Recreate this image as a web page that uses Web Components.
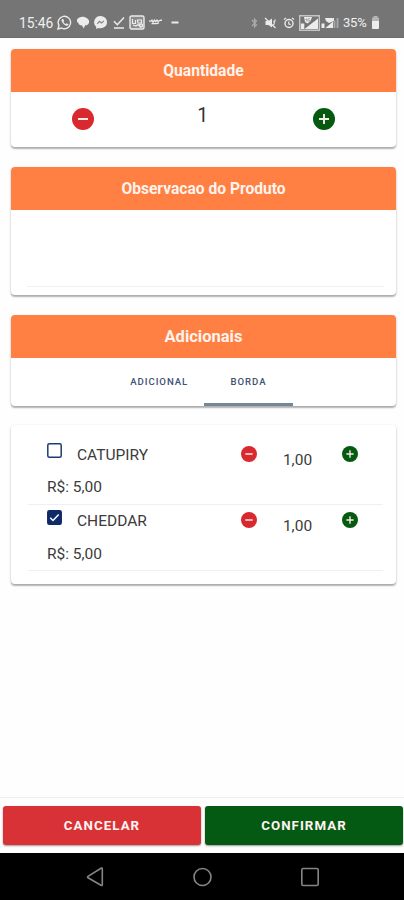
<!DOCTYPE html>
<html lang="pt-BR">
<head>
<meta charset="utf-8">
<title>Pedido</title>
<style>
html,body{margin:0;height:100%;background:#fefefe}
body{font-family:Roboto,"Liberation Sans",sans-serif;color:#333}
</style>
</head>
<body>
<order-screen></order-screen>
<script>
const define = (name, html, init) => customElements.define(name, class extends HTMLElement {
  constructor() {
    super();
    this.attachShadow({mode: 'open'});
  }
  connectedCallback() {
    const t = document.createElement('template');
    t.innerHTML = html;
    this.shadowRoot.replaceChildren(t.content.cloneNode(true));
    if (init) init(this, this.shadowRoot);
  }
});

define('status-bar', `
<style>
:host{display:flex;align-items:center;box-sizing:border-box;height:37.5px;padding:9px 24px 0 19px;background:#757575;color:#f0f0f0;font-size:13.8px;line-height:16px;border-bottom:1px solid #6b6b6b}
svg{display:block;flex:none;fill:none;stroke:#ececec;stroke-width:1.4}
.grow{flex:1}
.f{fill:#ececec;stroke:none}
.clock{width:38px}
.pct{width:28px;font-size:13px;letter-spacing:-.2px}
</style>
<span class="clock">15:46</span>
<svg width="15" height="15" viewBox="0 0 15 15"><path d="M1 14l.9-3.6A6.2 6.2 0 1 1 4.5 13z"/><path class="f" d="M5.2 4c-1 .8-.8 2 .2 3.6 1.200 1.900 3 3.300 4.600 3.200.9-.1 1.500-.7 1.500-1.500L9.700 8.200l-.8.9C7.800 8.700 6.900 7.800 6.400 6.700l.7-.8L6.300 4z"/></svg>
<svg style="margin-left:4px" width="14" height="15" viewBox="0 0 14 15"><path class="f" d="M3.500 2.500C6 1 9.500 2 11 3.200c2.400 1.300 2.800 4 1.200 6-.9 1-2.200 1.100-3.200 1.200L7.800 13.500l-1.800-3C4 10.500 2.600 9.500 2.300 7.800.4 7 .2 3.600 3.500 2.500z"/></svg>
<svg style="margin-left:3px" width="15" height="15" viewBox="0 0 15 15"><path class="f" d="M7.500 1a6.500 6.100 0 0 1 0 12.300c-.8 0-1.500-.1-2.100-.3L3.200 14v-2.200A6.200 6.200 0 0 1 7.500 1z"/><path d="M4.200 8.800l2.300-2.400 2 1.500 2.400-2" stroke="#858585" stroke-width="1.200"/></svg>
<svg style="margin-left:4px" width="14" height="15" viewBox="0 0 14 15"><path d="M2 6.200l3.300 3.500L12 2.500M2 13.100h10" stroke-width="1.500"/></svg>
<svg style="margin-left:3px" width="16" height="15" viewBox="0 0 16 15"><rect x="1" y="1" width="14" height="13" rx="1.500" fill="#8b8b8b"/><path d="M3.500 4v4.500h3V5m2 0h4v3H9zM4 10l3 1 2-1.500 3 2.500" stroke-width="1.200"/><circle cx="12" cy="10.500" r="1.500"/></svg>
<svg style="margin-left:3px" width="15" height="15" viewBox="0 0 15 15"><path d="M1 6.200h2l1-1 1 2 1.500-2 1 1.500L9 5l1 1.500 1.500-1L14 5M3.500 8.600h4.800L11 7.800" stroke-width="1.300"/></svg>
<svg style="margin-left:8px" width="8" height="15" viewBox="0 0 8 15"><path d="M.5 7.500h7" stroke-width="2"/></svg>
<span class="grow"></span>
<svg width="7" height="14" viewBox="0 0 7 14" opacity=".45"><path d="M1 4l4.500 5L3.500 11V3l2 2L1 10" stroke-width="1.200"/></svg>
<svg style="margin-left:6px" width="13" height="14" viewBox="0 0 13 14"><path class="f" d="M1.500 5h3L8 2.500v9L4.500 9h-3z"/><path d="M1 2l10.500 10M9.500 5c1 1 1 3 0 4M11 3.500v2" stroke-width="1.200"/></svg>
<svg style="margin-left:6px" width="12" height="14" viewBox="0 0 12 14"><circle cx="6" cy="7.500" r="4"/><path d="M1 3.500L3 2m6 0l2 1.500M5.800 5.500v2.300l1.800.9" stroke-width="1.200"/></svg>
<svg style="margin-left:4px" width="21" height="16" viewBox="0 0 21 16"><path d="M.7.700h19.600v14.600H.7z" stroke="#c4c4c4"/><path class="f" d="M19 3.500V14H5.500z"/><path class="f" d="M1.800 8.500h3.500V14H1.800zM5 2h8l-1.500 4-3 2.500L6 7z"/><path d="M7.500 3.500l-1 1.500h2.200M8 3.500v3m3-3H9.700v2.600H11V5" stroke="#999" stroke-width=".7"/></svg>
<svg style="margin-left:1px" width="18" height="16" viewBox="0 0 18 16"><path class="f" d="M12 6.500V13H4.500z"/><path class="f" d="M.5 8.500h3V13h-3zM4 3h9v3L8 8 5 6z"/><path d="M13.500 5.500V13m3-10v10" stroke="#aaa" stroke-width="1.800"/></svg>
<span class="pct" style="margin-left:4px">35%</span>
<svg width="9" height="15" viewBox="0 0 9 15"><path fill="#b5b5b5" stroke="none" d="M2.500 1h4v1.500H8V6H1V2.500h1.500z"/><path class="f" d="M1 6h7v7q0 1-1 1H2q-1 0-1-1z"/></svg>
`);

define('product-card', `
<style>
:host{display:block;border-radius:4px;background:#fff;box-shadow:0 2px 1.500px rgba(0,0,0,.24),0 1px 3px rgba(0,0,0,.16);overflow:hidden}
header{box-sizing:border-box;height:43px;padding-top:var(--title-drop,1px);line-height:43px;background:#ff8042;color:#fff4ed;text-align:center;font-weight:700;font-size:var(--title-size,15.6px)}
header:empty{display:none}
</style><header></header><slot></slot>`, (el, root) => {
  root.querySelector('header').textContent = el.getAttribute('heading') || '';
});

define('round-button', `
<style>
:host{display:block;width:var(--size,22px);height:var(--size,22px)}
svg{display:block;width:100%;height:100%}
</style><svg viewBox="0 0 22 22"><circle cx="11" cy="11" r="11"/><path fill="none" stroke="#fbecec" stroke-width="1.900"/></svg>`, (el, root) => {
  const plus = el.getAttribute('kind') === 'plus';
  root.querySelector('circle').setAttribute('fill', plus ? '#055a10' : '#d9292f');
  root.querySelector('path').setAttribute('d', plus ? 'M6 11h10M11 6v10' : 'M6 11h10');
});

define('quantity-stepper', `
<style>
:host{display:grid;grid-template-columns:1fr 98px 1fr;height:55px;box-sizing:border-box;padding:16.400px 61.500px 0 61px}
round-button:last-child{justify-self:end}
span{text-align:center;font-size:19.500px;line-height:24px;margin-top:-4px;padding-right:1px}
</style><round-button kind="minus"></round-button><span><slot></slot></span><round-button kind="plus"></round-button>`);

define('tab-strip', `
<style>
:host{display:flex;justify-content:center;height:48px}
</style><slot></slot>`);

define('tab-item', `
<style>
:host{display:block;box-sizing:border-box;width:88.500px;height:48px;padding-top:17px;line-height:14px;text-align:center;font-size:9.600px;font-weight:500;letter-spacing:.95px;color:#405273}
:host([wide]){width:90px}
:host([active]){border-bottom:3px solid #758694}
</style><slot></slot>`);

define('check-box', `
<style>:host{display:block;width:15px;height:15px}svg{display:block}</style>
<svg width="15" height="15" viewBox="0 0 15 15"><rect x=".8" y=".8" width="13.400" height="13.400" rx="1.500" fill="#fff" stroke="#1c3c74" stroke-width="1.500"/><path d="M3.200 7.800l2.800 2.700 5.700-6" fill="none" stroke="none" stroke-width="1.500"/></svg>`, (el, root) => {
  if (el.hasAttribute('checked')) {
    root.querySelector('rect').setAttribute('fill', '#0d2b66');
    root.querySelector('rect').setAttribute('stroke', '#0d2b66');
    root.querySelector('path').setAttribute('stroke', '#fff');
  }
});

define('extra-item', `
<style>
:host{display:block;box-sizing:border-box;height:66.500px;margin:0 13px 0 17px;padding:5px 25px 0 19px;border-bottom:1px solid #f0f0f0;font-size:15.500px;line-height:20px;color:#3b3b3b}
.top{display:grid;grid-template-columns:30px 1fr 16px 85px 16px;align-items:start}
.name{padding-top:1.500px}
.qty{padding:6.500px 4px 0 0;text-align:center}
round-button{--size:16px;margin-top:2.500px}
.price{margin-top:7.500px}
</style>
<div class="top"><check-box></check-box><span class="name"><slot></slot></span><round-button kind="minus"></round-button><span class="qty">1,00</span><round-button kind="plus"></round-button></div><div class="price">R$: 5,00</div>`, (el, root) => {
  if (el.hasAttribute('checked')) {
    const box = document.createElement('check-box');
    box.setAttribute('checked', '');
    root.querySelector('check-box').replaceWith(box);
  }
});

define('action-button', `
<style>
:host{display:block;flex:1;height:39px;line-height:39px;border-radius:3px;text-align:center;background:var(--tone);color:#fff4f2;font-size:13.300px;font-weight:700;letter-spacing:1.050px;box-shadow:0 1px 2px rgba(0,0,0,.4)}
</style><slot></slot>`);

define('nav-bar', `
<style>
:host{display:flex;box-sizing:border-box;height:47px;padding:13px 83px 0 84px;background:#000;justify-content:space-between}
svg{display:block;fill:none;stroke:#858585;stroke-width:1.600}
</style>
<svg width="22" height="22" viewBox="0 0 22 22"><path d="M17 2.200q1.300-.7 1.300.8v15.500q0 1.500-1.300.8L4 11.800q-1-.8 0-1.500z"/></svg>
<svg width="22" height="22" viewBox="0 0 22 22"><circle cx="10.500" cy="11" r="8.500"/></svg>
<svg width="22" height="22" viewBox="0 0 22 22"><rect x="2.800" y="2.500" width="16.400" height="17" rx="1.500"/></svg>`);

define('order-screen', `
<style>
:host{display:flex;flex-direction:column;height:900px;width:404px;overflow:hidden}
main{flex:1;display:flex;flex-direction:column;padding:11px 8px 0 11px}
.note{height:76px;margin:0 12px 8px 16px;border-bottom:1px solid #f0f0f0}
.c1{margin-bottom:20px}
.c2{margin-bottom:20px}
.c3{--title-size:16.500px;--title-drop:0;margin-bottom:19px}
.c4{padding:13.500px 0 12.500px}
footer{display:flex;gap:4px;box-sizing:border-box;height:56px;padding:8px 1px 0 3px;border-top:1px solid #eee}
</style>
<status-bar></status-bar>
<main>
<product-card class="c1" heading="Quantidade"><quantity-stepper>1</quantity-stepper></product-card>
<product-card class="c2" heading="Observacao do Produto"><div class="note"></div></product-card>
<product-card class="c3" heading="Adicionais"><tab-strip><tab-item wide>ADICIONAL</tab-item><tab-item active>BORDA</tab-item></tab-strip></product-card>
<product-card class="c4"><extra-item>CATUPIRY</extra-item><extra-item checked>CHEDDAR</extra-item></product-card>
</main>
<footer><action-button style="--tone:#d93236">CANCELAR</action-button><action-button style="--tone:#055a13">CONFIRMAR</action-button></footer>
<nav-bar></nav-bar>`);
</script>
</body>
</html>
